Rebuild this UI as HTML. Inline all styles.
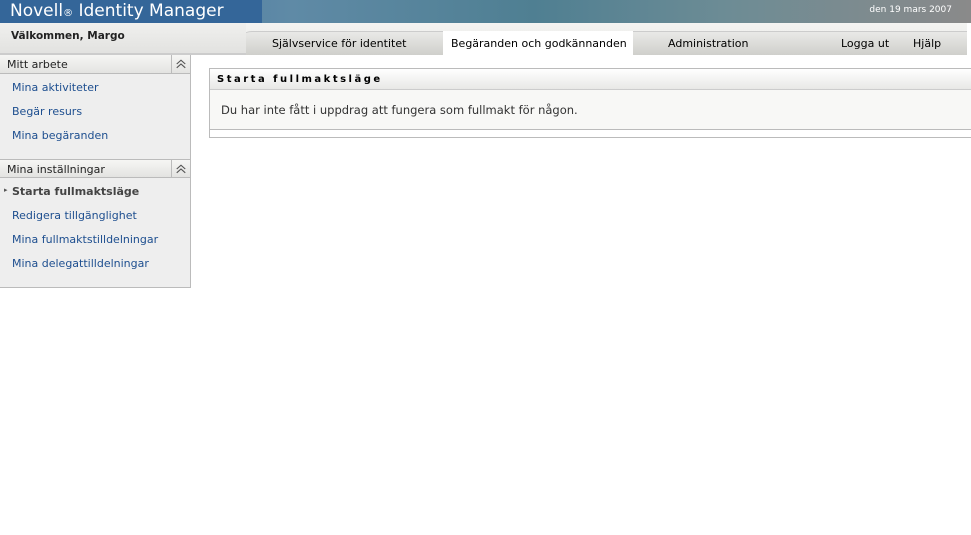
<!DOCTYPE html>
<html><head><meta charset="utf-8"><style>
*{margin:0;padding:0;box-sizing:border-box}
body{width:971px;height:535px;background:#fff;font-family:"DejaVu Sans","Liberation Sans",sans-serif;font-size:11px;position:relative;overflow:hidden}
.a{position:absolute}
.top{left:0;top:0;width:971px;height:23px;background:linear-gradient(90deg,#3d6f9e 0,#5f8aa6 30%,#4f7f92 55%,#6d8c95 75%,#8a8a8a 100%)}
.logo{left:0;top:0;width:262px;height:23px;background:#346699;color:#fff;font-size:17px;padding-left:10px;line-height:23px}
.date{right:19px;top:5px;color:#fff;font-size:9px}
.bar{left:0;top:23px;width:967px;height:32px;background:linear-gradient(#f4f4f2,#e6e6e4)}
.tabs{left:236px;top:31px;width:731px;height:24px;background:linear-gradient(#e9e9e7,#cfcfcb);border-top:1px solid #ccc;border-radius:16px 0 0 0}
.wel{left:0;top:23px;width:246px;height:32px;background:linear-gradient(#f0f0ee,#e2e2e0);border-bottom:2px solid #ccc}
.tab{top:37px;font-size:11px;color:#000}
.act{left:443px;top:31px;width:190px;height:24px;background:#fff}
.side{left:0;top:55px;width:191px;height:233px;background:#eeeeee;border-right:1px solid #bbb;border-bottom:1px solid #bbb}
.sh{left:0;width:190px;height:19px;background:linear-gradient(#f6f6f4,#e3e3e1);border-bottom:1px solid #bbb;color:#222;padding-left:7px;line-height:19px;font-size:11px}
.sh svg{position:absolute;right:0;top:0;border-left:1px solid #bbb}
.lk{left:12px;color:#1d4e8f;font-size:11px}
.box{left:209px;top:68px;width:770px;height:70px;border:1px solid #bbb;background:#f8f8f6}
.bh{left:0;top:0;width:100%;height:21px;background:linear-gradient(#fff,#e8e8e6);border-bottom:1px solid #ccc;font-weight:bold;letter-spacing:2.5px;font-size:10px;padding-left:7px;line-height:21px}
.bf{left:0;top:60px;width:100%;height:8px;background:#fff;border-top:1px solid #bbb}
</style></head><body>
<div class="a top"></div>
<div class="a logo">Novell<span style="font-size:10px">®</span> Identity Manager</div>
<div class="a date">den 19 mars 2007</div>
<div class="a bar"></div>
<div class="a tabs"></div>
<div class="a wel"></div>
<div class="a" style="left:11px;top:30px;font-weight:bold;font-size:10.5px;color:#222">Välkommen, Margo</div>
<div class="a act"></div>
<div class="a tab" style="left:272px">Självservice för identitet</div>
<div class="a tab" style="left:451px">Begäranden och godkännanden</div>
<div class="a tab" style="left:668px">Administration</div>
<div class="a tab" style="left:841px">Logga ut</div>
<div class="a tab" style="left:913px">Hjälp</div>
<div class="a side"></div>
<div class="a sh" style="top:55px">Mitt arbete<svg width="19" height="18" viewBox="0 0 19 18"><path d="M5 9l4.5-4 4.5 4M5 13l4.5-4 4.5 4" fill="none" stroke="#555" stroke-width="1.2"/></svg></div>
<div class="a lk" style="top:81px">Mina aktiviteter</div>
<div class="a lk" style="top:105px">Begär resurs</div>
<div class="a lk" style="top:129px">Mina begäranden</div>
<div class="a sh" style="top:159px;border-top:1px solid #bbb">Mina inställningar<svg width="19" height="18" viewBox="0 0 19 18"><path d="M5 9l4.5-4 4.5 4M5 13l4.5-4 4.5 4" fill="none" stroke="#555" stroke-width="1.2"/></svg></div>
<div class="a" style="left:4px;top:186px;font-size:7px;color:#555">▸</div>
<div class="a lk" style="top:185px;color:#444;font-weight:bold">Starta fullmaktsläge</div>
<div class="a lk" style="top:209px">Redigera tillgänglighet</div>
<div class="a lk" style="top:233px">Mina fullmaktstilldelningar</div>
<div class="a lk" style="top:257px">Mina delegattilldelningar</div>
<div class="a box"><div class="a bh">Starta fullmaktsläge</div>
<div class="a" style="left:11px;top:34px;color:#333;font-size:11.5px">Du har inte fått i uppdrag att fungera som fullmakt för någon.</div>
<div class="a bf"></div></div>
</body></html>
